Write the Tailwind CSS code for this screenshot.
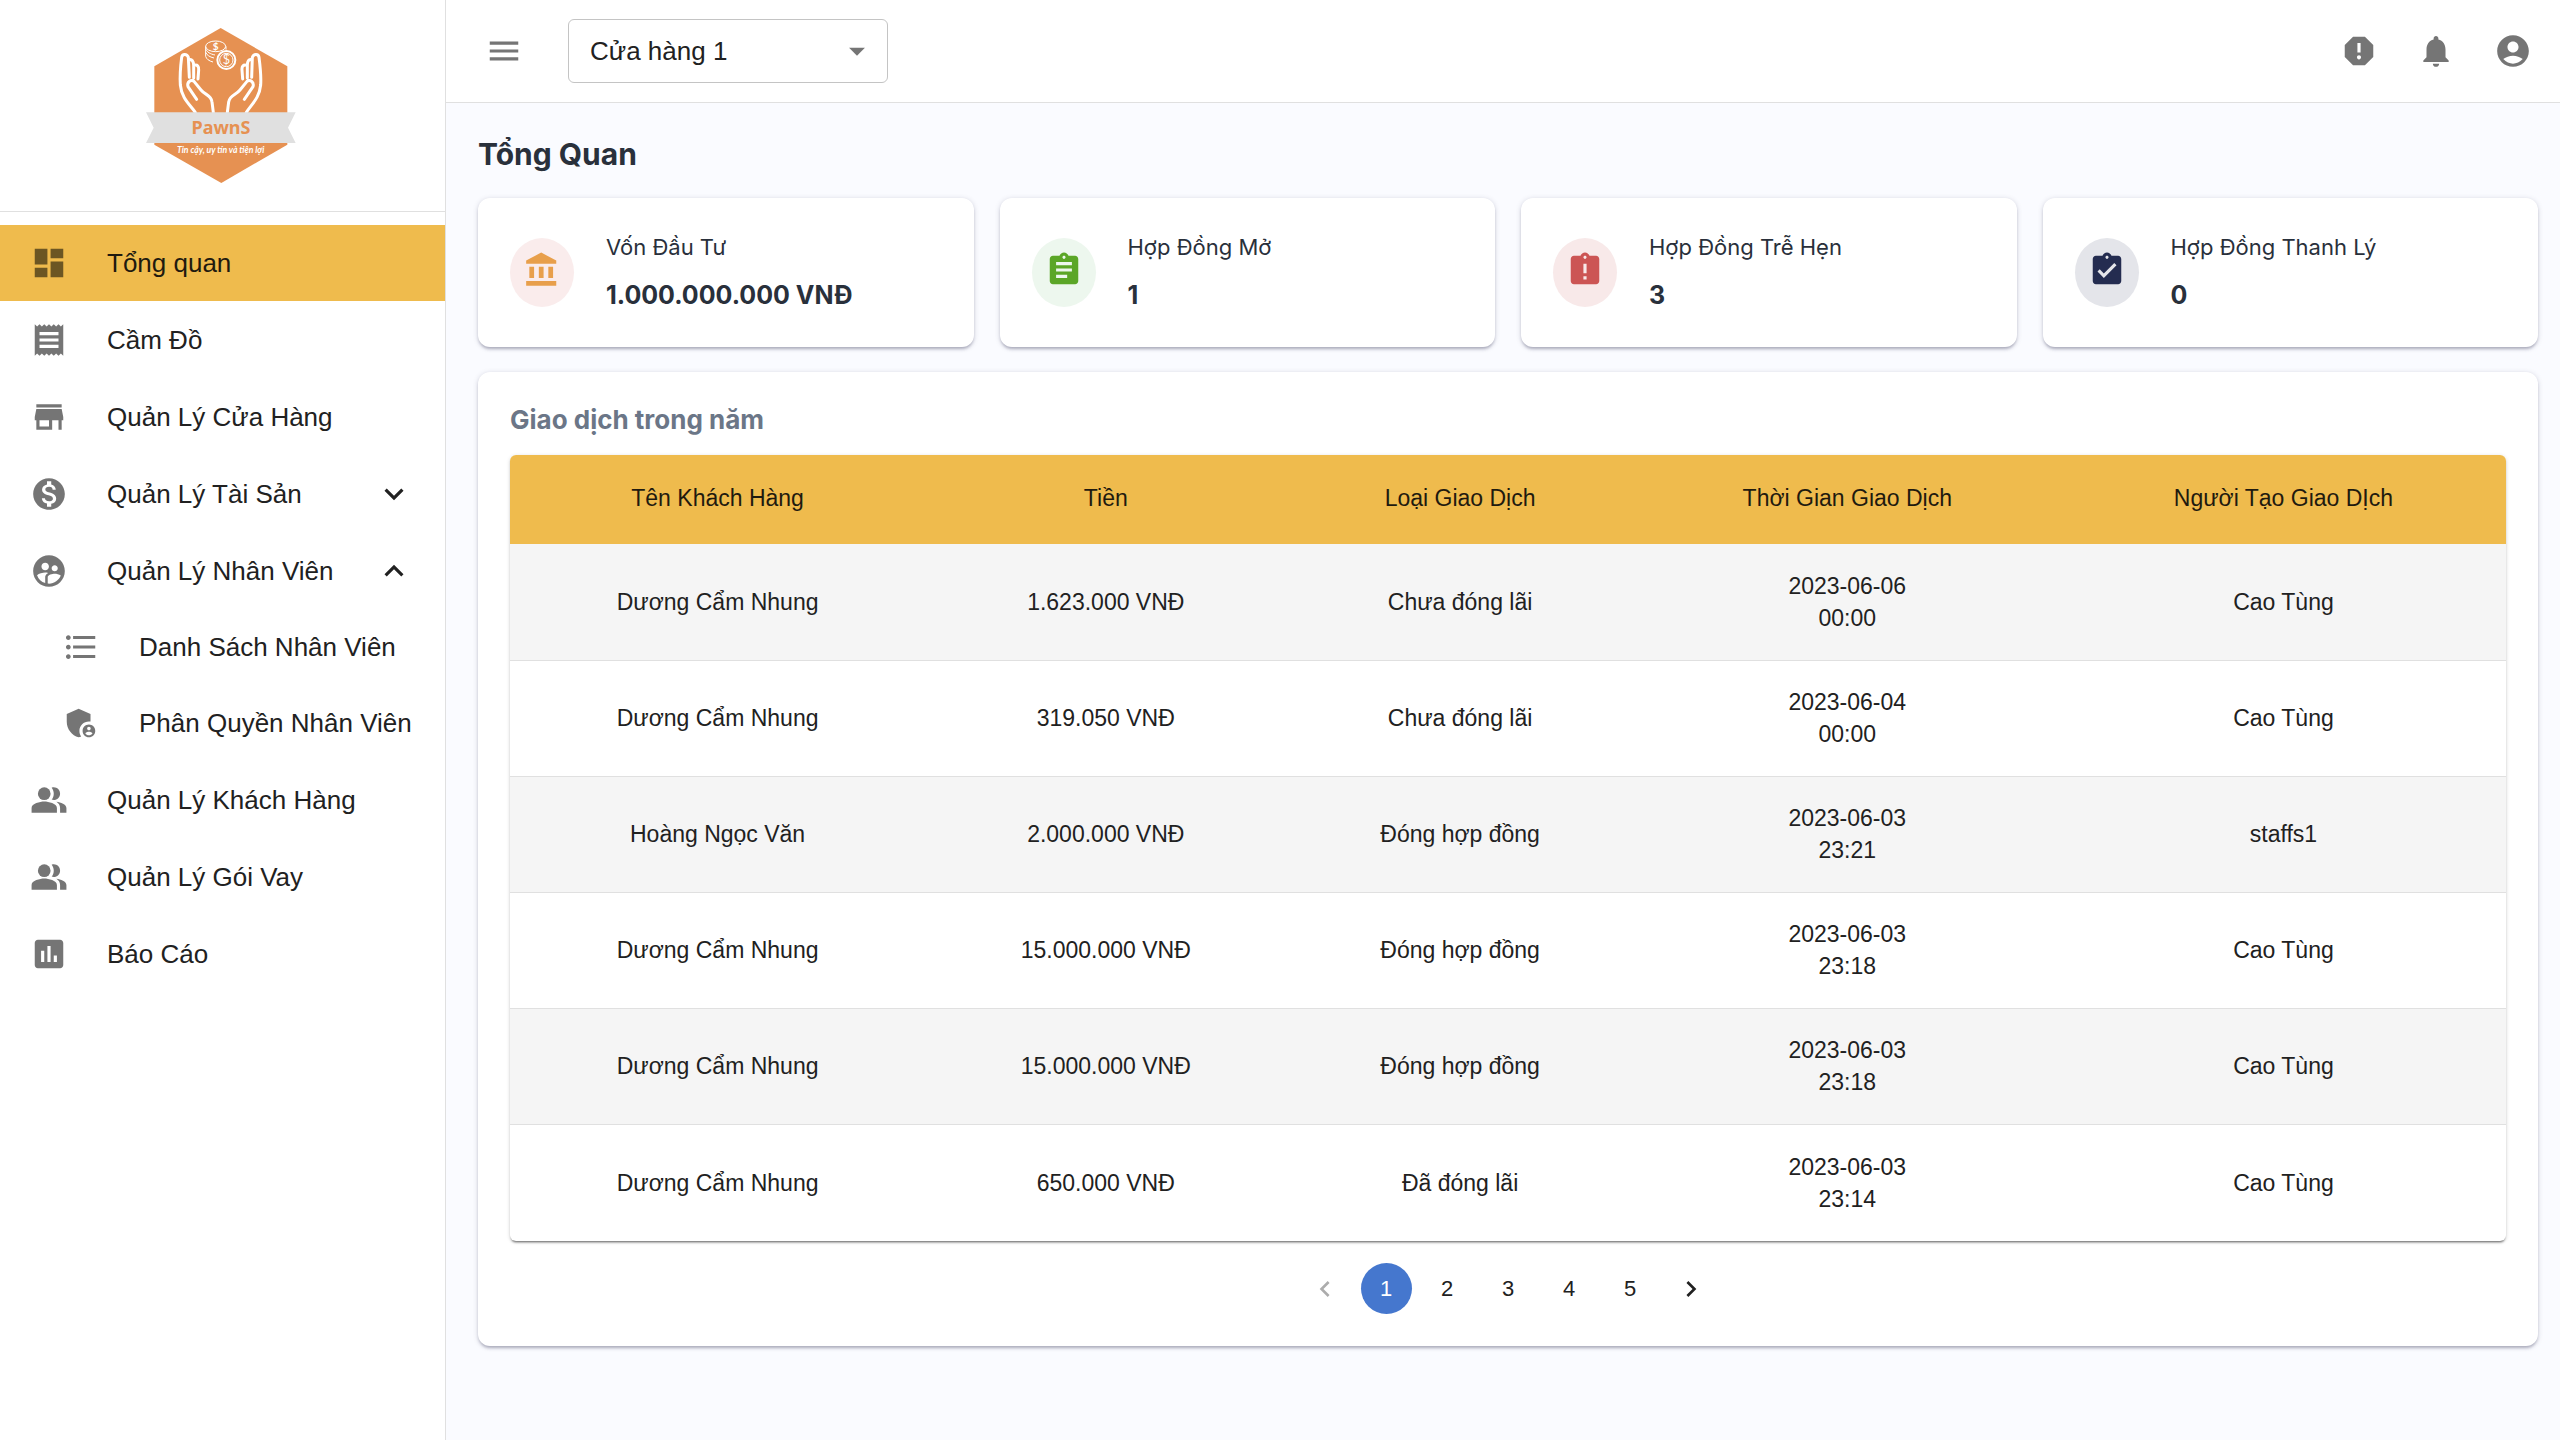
<!DOCTYPE html>
<html lang="vi">
<head>
<meta charset="utf-8">
<title>PawnS - Tổng Quan</title>
<script src="https://cdn.jsdelivr.net/npm/@tailwindcss/browser@4"></script>
</head>
<body class="bg-[#fafbff] font-['Liberation_Sans',Arial,sans-serif] text-[#212121]">
<svg class="hidden" aria-hidden="true">
  <symbol id="dashboard" viewBox="0 0 24 24"><path d="M3 13h8V3H3v10zm0 8h8v-6H3v6zm10 0h8V11h-8v10zm0-18v6h8V3h-8z"/></symbol>
  <symbol id="receipt" viewBox="0 0 24 24"><path d="M18 17H6v-2h12v2zm0-4H6v-2h12v2zm0-4H6V7h12v2zM3 22l1.500-1.500L6 22l1.500-1.500L9 22l1.500-1.500L12 22l1.500-1.500L15 22l1.500-1.500L18 22l1.500-1.500L21 22V2l-1.500 1.500L18 2l-1.500 1.500L15 2l-1.500 1.500L12 2l-1.500 1.500L9 2 7.500 3.500 6 2 4.500 3.500 3 2v20z"/></symbol>
  <symbol id="store" viewBox="0 0 24 24"><path d="M20 4H4v2h16V4zm1 10v-2l-1-5H4l-1 5v2h1v6h10v-6h4v6h2v-6h1zm-9 4H6v-4h6v4z"/></symbol>
  <symbol id="money" viewBox="0 0 24 24"><path d="M12 2C6.480 2 2 6.480 2 12s4.480 10 10 10 10-4.480 10-10S17.520 2 12 2zm1.410 16.090V20h-2.670v-1.930c-1.710-.36-3.160-1.460-3.270-3.400h1.960c.1 1.050.82 1.870 2.650 1.870 1.960 0 2.400-.98 2.400-1.590 0-.83-.44-1.610-2.670-2.140-2.480-.6-4.180-1.620-4.180-3.670 0-1.720 1.390-2.840 3.110-3.210V4h2.670v1.950c1.860.45 2.790 1.860 2.850 3.390H14.300c-.05-1.110-.64-1.870-2.220-1.870-1.500 0-2.400.68-2.400 1.640 0 .84.65 1.390 2.670 1.910s4.180 1.390 4.180 3.910c-.01 1.830-1.380 2.830-3.120 3.160z"/></symbol>
  <symbol id="staff" viewBox="0 0 24 24"><path d="M11.990 2c-5.520 0-10 4.480-10 10s4.480 10 10 10 10-4.480 10-10-4.480-10-10-10zm3.610 6.340c1.070 0 1.930.86 1.930 1.930 0 1.070-.86 1.930-1.930 1.930-1.070 0-1.930-.86-1.930-1.930-.01-1.070.86-1.930 1.930-1.930zm-6-1.580c1.300 0 2.360 1.060 2.360 2.360 0 1.300-1.060 2.360-2.360 2.360s-2.360-1.060-2.360-2.360c0-1.310 1.050-2.360 2.360-2.360zm0 9.130v3.750c-2.400-.75-4.300-2.600-5.140-4.960 1.050-1.120 3.670-1.690 5.140-1.690.53 0 1.200.08 1.900.22-1.640.87-1.900 2.020-1.900 2.680zM11.990 20c-.27 0-.53-.01-.79-.04v-4.070c0-1.420 2.940-2.130 4.400-2.130 1.070 0 2.920.39 3.840 1.150-1.170 2.970-4.060 5.090-7.450 5.090z"/></symbol>
  <symbol id="list" viewBox="0 0 24 24"><path d="M4 10.500c-.83 0-1.500.67-1.500 1.500s.67 1.500 1.500 1.500 1.500-.67 1.500-1.500-.67-1.500-1.500-1.500zm0-6c-.83 0-1.500.67-1.500 1.500S3.170 7.500 4 7.500 5.500 6.830 5.500 6 4.830 4.500 4 4.500zm0 12c-.83 0-1.500.68-1.500 1.500s.68 1.500 1.500 1.500 1.500-.68 1.500-1.500-.67-1.500-1.500-1.500zM7 19h14v-2H7v2zm0-6h14v-2H7v2zm0-8v2h14V5H7z"/></symbol>
  <symbol id="shield" viewBox="0 0 24 24"><path d="M17 11c.34 0 .67.04 1 .09V6.270L10.500 3 3 6.270v4.910c0 4.540 3.200 8.790 7.500 9.820.55-.13 1.080-.32 1.600-.55-.69-.98-1.100-2.170-1.100-3.450 0-3.310 2.690-6 6-6z"/><path d="M17 13c-2.210 0-4 1.790-4 4s1.790 4 4 4 4-1.790 4-4-1.790-4-4-4zm0 1.380c.62 0 1.120.51 1.120 1.120s-.51 1.120-1.120 1.120-1.120-.51-1.120-1.120.5-1.120 1.120-1.120zm0 5.370c-.93 0-1.740-.46-2.240-1.170.05-.72 1.510-1.080 2.240-1.080s2.190.36 2.240 1.080c-.5.71-1.310 1.170-2.240 1.170z"/></symbol>
  <symbol id="people" viewBox="0 0 24 24"><path d="M16.670 13.130C18.040 14.060 19 15.320 19 17v3h4v-3c0-2.180-3.570-3.470-6.330-3.870z"/><circle cx="9" cy="8" r="4"/><path d="M15 12c2.210 0 4-1.790 4-4s-1.790-4-4-4c-.47 0-.91.1-1.330.24C14.500 5.270 15 6.580 15 8s-.5 2.730-1.330 3.760c.42.14.86.24 1.330.24zM9 13c-2.670 0-8 1.340-8 4v3h16v-3c0-2.660-5.330-4-8-4z"/></symbol>
  <symbol id="report" viewBox="0 0 24 24"><path d="M19 3H5c-1.100 0-2 .9-2 2v14c0 1.100.9 2 2 2h14c1.100 0 2-.9 2-2V5c0-1.100-.9-2-2-2zM9 17H7v-7h2v7zm4 0h-2V7h2v10zm4 0h-2v-4h2v4z"/></symbol>
  <symbol id="more" viewBox="0 0 24 24"><path d="M16.590 8.590 12 13.170 7.410 8.590 6 10l6 6 6-6z"/></symbol>
  <symbol id="less" viewBox="0 0 24 24"><path d="m12 8-6 6 1.410 1.410L12 10.830l4.590 4.580L18 14z"/></symbol>
  <symbol id="menu" viewBox="0 0 24 24"><path d="M3 18h18v-2H3v2zm0-5h18v-2H3v2zm0-7v2h18V6H3z"/></symbol>
  <symbol id="arrow" viewBox="0 0 24 24"><path d="m7 10 5 5 5-5z"/></symbol>
  <symbol id="alert" viewBox="0 0 24 24"><path d="M15.730 3H8.270L3 8.270v7.460L8.270 21h7.460L21 15.730V8.270L15.730 3zM12 17.300c-.72 0-1.300-.58-1.300-1.300 0-.72.58-1.300 1.300-1.300.72 0 1.300.58 1.300 1.300 0 .72-.58 1.300-1.300 1.300zm1-4.300h-2V7h2v6z"/></symbol>
  <symbol id="bell" viewBox="0 0 24 24"><path d="M12 22c1.100 0 2-.9 2-2h-4c0 1.100.89 2 2 2zm6-6v-5c0-3.070-1.640-5.640-4.500-6.320V4c0-.83-.67-1.500-1.500-1.500s-1.500.67-1.500 1.500v.68C7.630 5.360 6 7.920 6 11v5l-2 2v1h16v-1l-2-2z"/></symbol>
  <symbol id="account" viewBox="0 0 24 24"><path d="M12 2C6.480 2 2 6.480 2 12s4.480 10 10 10 10-4.480 10-10S17.520 2 12 2zm0 4c1.930 0 3.500 1.570 3.500 3.500S13.930 13 12 13s-3.500-1.570-3.500-3.500S10.070 6 12 6zm0 14c-2.030 0-4.430-.82-6.140-2.880C7.550 15.800 9.680 15 12 15s4.450.8 6.140 2.120C16.430 19.180 14.030 20 12 20z"/></symbol>
  <symbol id="bank" viewBox="0 0 24 24"><path d="M4 10v7h3v-7H4zm6 0v7h3v-7h-3zM2 22h19v-3H2v3zm14-12v7h3v-7h-3zm-4.500-9L2 6v2h19V6l-9.500-5z"/></symbol>
  <symbol id="open" viewBox="0 0 24 24"><path d="M19 3h-4.180C14.400 1.840 13.300 1 12 1c-1.300 0-2.400.84-2.820 2H5c-1.100 0-2 .9-2 2v14c0 1.100.9 2 2 2h14c1.100 0 2-.9 2-2V5c0-1.100-.9-2-2-2zm-7 0c.55 0 1 .45 1 1s-.45 1-1 1-1-.45-1-1 .45-1 1-1zm2 14H7v-2h7v2zm3-4H7v-2h10v2zm0-4H7V7h10v2z"/></symbol>
  <symbol id="late" viewBox="0 0 24 24"><path d="M19 3h-4.180C14.400 1.840 13.300 1 12 1c-1.300 0-2.400.84-2.820 2H5c-1.100 0-2 .9-2 2v14c0 1.100.9 2 2 2h14c1.100 0 2-.9 2-2V5c0-1.100-.9-2-2-2zm-6 15h-2v-2h2v2zm0-4h-2V8h2v6zm-1-9c-.55 0-1-.45-1-1s.45-1 1-1 1 .45 1 1-.45 1-1 1z"/></symbol>
  <symbol id="done" viewBox="0 0 24 24"><path d="M19 3h-4.180C14.400 1.840 13.300 1 12 1c-1.300 0-2.400.84-2.820 2H5c-1.100 0-2 .9-2 2v14c0 1.100.9 2 2 2h14c1.100 0 2-.9 2-2V5c0-1.100-.9-2-2-2zm-7 0c.55 0 1 .45 1 1s-.45 1-1 1-1-.45-1-1 .45-1 1-1zm-2 14-4-4 1.410-1.410L10 14.170l6.590-6.590L18 9l-8 8z"/></symbol>
  <symbol id="prev" viewBox="0 0 24 24"><path d="M15.410 7.410 14 6l-6 6 6 6 1.410-1.410L10.830 12z"/></symbol>
  <symbol id="next" viewBox="0 0 24 24"><path d="M10 6 8.590 7.410 13.170 12l-4.580 4.590L10 18l6-6z"/></symbol>
</svg>

<div class="flex min-h-screen">
  <aside class="w-[446px] shrink-0 border-r border-[#e0e0e0] bg-white">
    <a href="#" class="flex h-[212px] justify-center border-b border-[#e0e0e0] pt-7 pr-[3px]">
      <svg class="h-[155px] w-[150px]" viewBox="440 84 450 465" role="img" aria-label="PawnS">
        <path fill="#e69152" d="M664 84 864 199V434L666 549 465 434V199z"/>
        <g fill="none" stroke="#fff" stroke-width="9" stroke-linecap="round" stroke-linejoin="round">
          <path d="M588 337C570 312 547 295 543 255C541 225 544 195 547 172C549 160 563 161 567 172L570 232M568 180C578 176 583 184 583 196V234M583 196C595 192 599 200 598 210L596 237M592 298L566 260C562 246 574 238 584 244L605 270C618 286 636 285 638 306L642 337"/>
          <path d="M741 337C757 312 780 295 784 255C786 225 782 195 779 172C777 160 763 161 759 172L757 232M758 180C748 176 744 184 744 196V234M743 196C731 192 727 200 728 210L730 237M735 298L761 260C765 246 753 238 743 244L722 270C709 286 691 285 688 306L684 337"/>
        </g>
        <g fill="none" stroke="#fff" stroke-width="3">
          <ellipse cx="649" cy="139" rx="30" ry="16"/>
          <path d="M619 139v30c2 8 10 14 22 17M620 148c3 8 12 14 27 17M619 157c4 9 12 14 25 17M680 139v10"/>
          <circle cx="681" cy="180" r="27" stroke-width="6"/>
          <circle cx="681" cy="180" r="20"/>
        </g>
        <text x="649" y="150" fill="#fff" font-family="Lato" font-size="30" font-weight="700" text-anchor="middle">$</text>
        <text x="681" y="193" fill="#fff" font-family="Lato" font-size="38" text-anchor="middle">$</text>
        <path fill="#e0e0e0" d="M440 337H889L866 383 889 429H440L463 383z"/>
        <text x="665" y="403" fill="#e69152" font-family="Noto Sans" font-size="54" font-weight="700" text-anchor="middle">PawnS</text>
        <text x="664" y="458" fill="#fff" font-family="Lato" font-size="26" font-weight="700" font-style="italic" text-anchor="middle">Tin cậy, uy tín và tiện lợi</text>
      </svg>
    </a>
    <nav class="pt-[13px] text-[26px] leading-8">
      <a href="#" class="flex h-[76px] items-center gap-[39px] bg-[#efbb4d] pl-[30px] text-[#1f1a0f]"><svg class="size-[38px] fill-[#6c5623]"><use href="#dashboard"/></svg>Tổng quan</a>
      <a href="#" class="flex h-[77px] items-center gap-[39px] pl-[30px]"><svg class="size-[38px] fill-[#757575]"><use href="#receipt"/></svg>Cầm Đồ</a>
      <a href="#" class="flex h-[77px] items-center gap-[39px] pl-[30px]"><svg class="size-[38px] fill-[#757575]"><use href="#store"/></svg>Quản Lý Cửa Hàng</a>
      <button class="flex h-[77px] w-full items-center gap-[39px] pr-8 pl-[30px]"><svg class="size-[38px] fill-[#757575]"><use href="#money"/></svg>Quản Lý Tài Sản<svg class="ml-auto size-[38px] fill-[#212121]"><use href="#more"/></svg></button>
      <button class="flex h-[77px] w-full items-center gap-[39px] pr-8 pl-[30px]" aria-expanded="true"><svg class="size-[38px] fill-[#757575]"><use href="#staff"/></svg>Quản Lý Nhân Viên<svg class="ml-auto size-[38px] fill-[#212121]"><use href="#less"/></svg></button>
      <a href="#" class="flex h-[76px] items-center gap-[39px] pl-[62px]"><svg class="size-[38px] fill-[#757575]"><use href="#list"/></svg>Danh Sách Nhân Viên</a>
      <a href="#" class="flex h-[76px] items-center gap-[39px] pl-[62px]"><svg class="size-[38px] fill-[#757575]"><use href="#shield"/></svg>Phân Quyền Nhân Viên</a>
      <a href="#" class="flex h-[77px] items-center gap-[39px] pl-[30px]"><svg class="size-[38px] fill-[#757575]"><use href="#people"/></svg>Quản Lý Khách Hàng</a>
      <a href="#" class="flex h-[77px] items-center gap-[39px] pl-[30px]"><svg class="size-[38px] fill-[#757575]"><use href="#people"/></svg>Quản Lý Gói Vay</a>
      <a href="#" class="flex h-[77px] items-center gap-[39px] pl-[30px]"><svg class="size-[38px] fill-[#757575]"><use href="#report"/></svg>Báo Cáo</a>
    </nav>
  </aside>

  <div class="min-w-0 flex-1">
    <header class="flex h-[103px] items-center border-b border-[#e0e0e0] bg-white pr-7 pl-[39px]">
      <button aria-label="Menu"><svg class="size-[38px] fill-[#757575]"><use href="#menu"/></svg></button>
      <div class="ml-[45px] grid w-80 items-center">
        <select aria-label="Cửa hàng" class="col-start-1 row-start-1 h-16 appearance-none rounded-md border border-[#c4c4c4] bg-white pr-14 pl-[21px] text-[26px]">
          <option>Cửa hàng 1</option>
        </select>
        <svg class="pointer-events-none col-start-1 row-start-1 mr-3 size-[38px] justify-self-end fill-[#757575]"><use href="#arrow"/></svg>
      </div>
      <div class="ml-auto flex gap-[39px]">
        <button aria-label="Báo lỗi"><svg class="size-[38px] fill-[#757575]"><use href="#alert"/></svg></button>
        <button aria-label="Thông báo"><svg class="size-[38px] fill-[#757575]"><use href="#bell"/></svg></button>
        <button aria-label="Tài khoản"><svg class="size-[38px] fill-[#757575]"><use href="#account"/></svg></button>
      </div>
    </header>

    <main class="pt-[31px] pr-[22px] pb-8 pl-8">
      <h1 class="font-[Inter,sans-serif] text-[30px] leading-10 font-bold text-[#29303b]">Tổng Quan</h1>

      <section class="mt-6 grid grid-cols-4 gap-[26px] font-[Inter,sans-serif] text-[#29303b]">
        <div class="flex h-[149px] items-center gap-8 rounded-xl bg-white px-8 shadow-[0_3px_3px_-1px_rgba(80,80,110,0.35),0_1px_5px_rgba(80,80,110,0.25)]">
          <div class="h-[69px] w-16 rounded-[50%] bg-[#faecec] p-[13px]"><svg class="size-[38px] fill-[#e89f4b]"><use href="#bank"/></svg></div>
          <div><p class="text-[22px] leading-8">Vốn Đầu Tư</p><p class="mt-3 text-[25px] leading-10 font-bold">1.000.000.000 VNĐ</p></div>
        </div>
        <div class="flex h-[149px] items-center gap-8 rounded-xl bg-white px-8 shadow-[0_3px_3px_-1px_rgba(80,80,110,0.35),0_1px_5px_rgba(80,80,110,0.25)]">
          <div class="h-[69px] w-16 rounded-[50%] bg-[#edf7ee] p-[13px]"><svg class="size-[38px] fill-[#5ba627]"><use href="#open"/></svg></div>
          <div><p class="text-[22px] leading-8">Hợp Đồng Mở</p><p class="mt-3 text-[25px] leading-10 font-bold">1</p></div>
        </div>
        <div class="flex h-[149px] items-center gap-8 rounded-xl bg-white px-8 shadow-[0_3px_3px_-1px_rgba(80,80,110,0.35),0_1px_5px_rgba(80,80,110,0.25)]">
          <div class="h-[69px] w-16 rounded-[50%] bg-[#f8e9e9] p-[13px]"><svg class="size-[38px] fill-[#cc5554]"><use href="#late"/></svg></div>
          <div><p class="text-[22px] leading-8">Hợp Đồng Trễ Hẹn</p><p class="mt-3 text-[25px] leading-10 font-bold">3</p></div>
        </div>
        <div class="flex h-[149px] items-center gap-8 rounded-xl bg-white px-8 shadow-[0_3px_3px_-1px_rgba(80,80,110,0.35),0_1px_5px_rgba(80,80,110,0.25)]">
          <div class="h-[69px] w-16 rounded-[50%] bg-[#e4e5ea] p-[13px]"><svg class="size-[38px] fill-[#242c50]"><use href="#done"/></svg></div>
          <div><p class="text-[22px] leading-8">Hợp Đồng Thanh Lý</p><p class="mt-3 text-[25px] leading-10 font-bold">0</p></div>
        </div>
      </section>

      <section class="mt-[25px] rounded-xl bg-white p-8 shadow-[0_3px_3px_-1px_rgba(80,80,110,0.35),0_1px_5px_rgba(80,80,110,0.25)]">
        <h2 class="font-[Inter,sans-serif] text-[26px] leading-8 font-bold text-[#6b7687]">Giao dịch trong năm</h2>
        <div class="mt-[19px] overflow-hidden rounded-md shadow-[0_3px_2px_-2px_rgba(0,0,0,0.4),0_2px_2px_rgba(0,0,0,0.14),0_1px_4px_rgba(0,0,0,0.14)]">
          <table class="w-full table-fixed text-center text-[23px] leading-8">
            <colgroup><col class="w-[20.8%]"><col class="w-[18.1%]"><col class="w-[17.4%]"><col class="w-[21.4%]"><col class="w-[22.3%]"></colgroup>
            <thead class="bg-[#efbb4d] text-[#1f1a0f]">
              <tr class="h-[89px]"><th class="pb-[3px] font-normal">Tên Khách Hàng</th><th class="pb-[3px] font-normal">Tiền</th><th class="pb-[3px] font-normal">Loại Giao Dịch</th><th class="pb-[3px] font-normal">Thời Gian Giao Dịch</th><th class="pb-[3px] font-normal">Người Tạo Giao DỊch</th></tr>
            </thead>
            <tbody>
              <tr class="h-[116px] border-b border-[#e0e0e0] bg-[#f5f5f5]"><td>Dương Cẩm Nhung</td><td>1.623.000 VNĐ</td><td>Chưa đóng lãi</td><td>2023-06-06<br>00:00</td><td>Cao Tùng</td></tr>
              <tr class="h-[116px] border-b border-[#e0e0e0]"><td>Dương Cẩm Nhung</td><td>319.050 VNĐ</td><td>Chưa đóng lãi</td><td>2023-06-04<br>00:00</td><td>Cao Tùng</td></tr>
              <tr class="h-[116px] border-b border-[#e0e0e0] bg-[#f5f5f5]"><td>Hoàng Ngọc Văn</td><td>2.000.000 VNĐ</td><td>Đóng hợp đồng</td><td>2023-06-03<br>23:21</td><td>staffs1</td></tr>
              <tr class="h-[116px] border-b border-[#e0e0e0]"><td>Dương Cẩm Nhung</td><td>15.000.000 VNĐ</td><td>Đóng hợp đồng</td><td>2023-06-03<br>23:18</td><td>Cao Tùng</td></tr>
              <tr class="h-[116px] border-b border-[#e0e0e0] bg-[#f5f5f5]"><td>Dương Cẩm Nhung</td><td>15.000.000 VNĐ</td><td>Đóng hợp đồng</td><td>2023-06-03<br>23:18</td><td>Cao Tùng</td></tr>
              <tr class="h-[117px]"><td>Dương Cẩm Nhung</td><td>650.000 VNĐ</td><td>Đã đóng lãi</td><td>2023-06-03<br>23:14</td><td>Cao Tùng</td></tr>
            </tbody>
          </table>
        </div>
        <nav class="mt-[22px] flex justify-center gap-2.5 text-[22px]" aria-label="Phân trang">
          <button disabled aria-label="Trang trước" class="flex size-[51px] items-center justify-center"><svg class="size-8 fill-[#acacac]"><use href="#prev"/></svg></button>
          <button class="size-[51px] rounded-full bg-[#4577ce] text-white" aria-current="page">1</button>
          <button class="size-[51px] rounded-full">2</button>
          <button class="size-[51px] rounded-full">3</button>
          <button class="size-[51px] rounded-full">4</button>
          <button class="size-[51px] rounded-full">5</button>
          <button aria-label="Trang sau" class="flex size-[51px] items-center justify-center"><svg class="size-8 fill-[#212121]"><use href="#next"/></svg></button>
        </nav>
      </section>
    </main>
  </div>
</div>
</body>
</html>
